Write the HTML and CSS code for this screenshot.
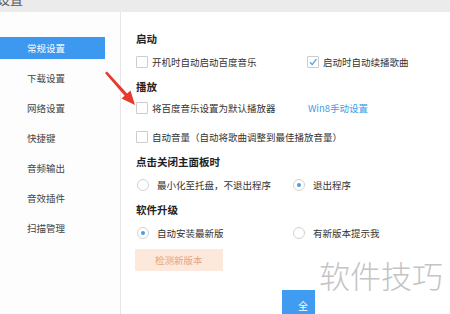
FILE: index.html
```html
<!DOCTYPE html>
<html lang="zh-CN">
<head>
    <meta charset="UTF-8">
    <title>设置</title>
    <link rel="stylesheet" href="styles.css">
</head>
<body>
    <div class="window">
        <div class="titlebar"><span class="title">设置</span></div>

        <div class="main">
            <!-- Left menu -->
            <ul class="sidebar">
                <li class="active">常规设置</li>
                <li>下载设置</li>
                <li>网络设置</li>
                <li>快捷键</li>
                <li>音频输出</li>
                <li>音效插件</li>
                <li>扫描管理</li>
            </ul>

            <!-- Settings -->
            <div class="content">
                <h3 class="section first">启动</h3>
                <div class="row check-row after-head">
                    <label class="option"><span class="box"></span>开机时自动启动百度音乐</label>
                    <label class="option"><span class="box checked"><svg viewBox="0 0 12 12" width="12" height="12"><path d="M3 6.2 L5.2 8.6 L9.4 3.2" fill="none" stroke="#4a9ee6" stroke-width="1.3"/></svg></span>启动时自动续播歌曲</label>
                </div>

                <h3 class="section">播放</h3>
                <div class="row check-row after-head tight">
                    <label class="option"><span class="box"></span>将百度音乐设置为默认播放器</label>
                    <a class="link">Win8手动设置</a>
                </div>
                <div class="row check-row spaced">
                    <label class="option"><span class="box"></span>自动音量（自动将歌曲调整到最佳播放音量）</label>
                </div>

                <h3 class="section">点击关闭主面板时</h3>
                <div class="row radio-row after-head">
                    <label class="option"><span class="radio"></span>最小化至托盘，不退出程序</label>
                    <label class="option"><span class="radio on"></span>退出程序</label>
                </div>

                <h3 class="section">软件升级</h3>
                <div class="row radio-row after-head">
                    <label class="option"><span class="radio on"></span>自动安装最新版</label>
                    <label class="option"><span class="radio"></span>有新版本提示我</label>
                </div>

                <button class="check-button">检测新版本</button>

                <div class="footer">
                    <button class="save-button">全</button>
                </div>
            </div>
        </div>

        <!-- overlays -->
        <div class="watermark">软件技巧</div>
        <svg class="arrow" width="450" height="314" viewBox="0 0 450 314">
            <polygon points="105,73 107,71.5 128,94.5 125.5,96.8" fill="#e53a2f"/>
            <polygon points="135,105 121.5,98.5 130.5,90.5" fill="#e53a2f"/>
        </svg>
    </div>
</body>
</html>
```

FILE: styles.css
```css
/* Basic Reset */
* {
    margin: 0;
    padding: 0;
    box-sizing: border-box;
}

body {
    width: 450px;
    height: 314px;
    overflow: hidden;
    background-color: #ffffff;
    font-family: "Noto Sans CJK SC", "Noto Sans", sans-serif;
    color: #333333;
}

.window {
    position: relative;
    width: 450px;
    height: 314px;
    overflow: hidden;
}

/* Title bar (mostly cropped) */
.titlebar {
    height: 12px;
    background-color: #ebebeb;
    overflow: hidden;
}

.title {
    display: block;
    margin-top: -9px;
    margin-left: -3px;
    font-size: 13px;
    line-height: 16px;
    color: #555555;
}

.main {
    display: flex;
    height: 302px;
}

/* Sidebar */
.sidebar {
    list-style: none;
    width: 121px;
    padding-top: 25px;
    border-right: 1px solid #e6e6e6;
    background-color: #fdfdfd;
}

.sidebar li {
    width: 105px;
    height: 22px;
    margin-bottom: 8px;
    padding-left: 27px;
    font-size: 9.5px;
    line-height: 22px;
    color: #444444;
}

.sidebar li.active {
    background-color: #3d98f0;
    color: #ffffff;
}

/* Content */
.content {
    flex: 1;
    padding-left: 15px;
    padding-top: 19px;
}

.section {
    height: 16px;
    margin-top: 7px;
    font-size: 10.5px;
    line-height: 16px;
    font-weight: bold;
    color: #222222;
}

.section.first {
    margin-top: 0;
}

.row {
    display: flex;
    align-items: center;
    height: 20px;
    font-size: 9.5px;
}

.row.after-head {
    margin-top: 5px;
}

.row.tight {
    margin-top: 3px;
}

.row.spaced {
    margin-top: 9px;
}

.option {
    display: flex;
    align-items: center;
    white-space: nowrap;
}

.check-row .option:first-child {
    min-width: 171px;
}

.radio-row .option:first-child {
    min-width: 156px;
}

.box {
    flex-shrink: 0;
    width: 12px;
    height: 12px;
    margin-right: 4px;
    border: 1px solid #cdcdcd;
    border-radius: 1px;
    background-color: #ffffff;
}

.box svg {
    display: block;
    margin: -1px 0 0 -1px;
}

.radio {
    position: relative;
    flex-shrink: 0;
    width: 12px;
    height: 12px;
    margin-left: 1px;
    margin-right: 8px;
    border: 1px solid #d2d2d2;
    border-radius: 50%;
    background-color: #ffffff;
}

.radio.on::after {
    content: "";
    position: absolute;
    left: 3px;
    top: 3px;
    width: 4px;
    height: 4px;
    border-radius: 50%;
    background-color: #4a9ee6;
}

.link {
    margin-left: 1px;
    color: #3d9be9;
}

/* Buttons */
.check-button {
    display: block;
    width: 88px;
    height: 22px;
    margin-top: 6px;
    margin-left: -1px;
    border: none;
    background-color: #fde9dc;
    color: #eaa37c;
    font-family: inherit;
    font-size: 9.5px;
    text-align: left;
    padding-left: 20px;
}

.footer {
    display: flex;
    margin-top: 19px;
    padding-left: 146px;
}

.save-button {
    width: 33px;
    height: 30px;
    border: none;
    background-color: #3f9cf1;
    color: #ffffff;
    font-family: inherit;
    font-size: 10px;
    text-align: right;
    padding-right: 7px;
}

/* Overlays */
.watermark {
    position: absolute;
    left: 319px;
    top: 253px;
    font-size: 31px;
    line-height: 44px;
    font-weight: 300;
    color: #c4c4c4;
    letter-spacing: 0;
}

.arrow {
    position: absolute;
    left: 0;
    top: 0;
    pointer-events: none;
}
```
